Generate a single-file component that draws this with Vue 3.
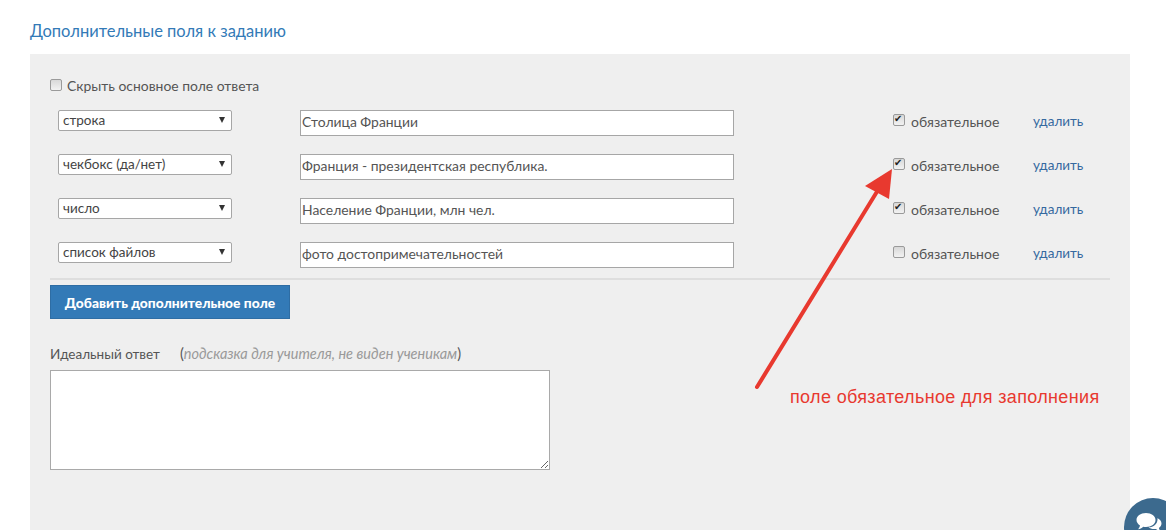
<script setup>
const rows = [
  { type: 'строка', label: 'Столица Франции', required: true },
  { type: 'чекбокс (да/нет)', label: 'Франция - президентская республика.', required: true },
  { type: 'число', label: 'Население Франции, млн чел.', required: true },
  { type: 'список файлов', label: 'фото достопримечательностей', required: false },
]
</script>

<template>
  <div class="page">
    <h2 class="title">Дополнительные поля к заданию</h2>
    <section class="panel">
      <label class="hide-main">
        <input type="checkbox" class="cb" />
        <span>Скрыть основное поле ответа</span>
      </label>
      <div class="rows">
        <div v-for="row in rows" :key="row.label" class="row">
          <div class="select">
            <span>{{ row.type }}</span>
            <i class="caret"></i>
          </div>
          <input class="text" type="text" :value="row.label" />
          <label class="req">
            <input type="checkbox" class="cb" :checked="row.required" />
            <span>обязательное</span>
          </label>
          <a class="del">удалить</a>
        </div>
      </div>
      <div class="divider"></div>
      <button class="add" type="button">Добавить дополнительное поле</button>
      <div class="ideal-label">
        <span class="ideal">Идеальный ответ</span>
        <span class="hint">(<em>подсказка для учителя, не виден ученикам</em>)</span>
      </div>
      <textarea class="area"></textarea>
    </section>

    <svg class="arrow" width="1166" height="530" viewBox="0 0 1166 530">
      <line x1="757" y1="387" x2="878" y2="190" stroke="#e8392f" stroke-width="4" stroke-linecap="round" />
      <polygon points="892,169 865,186 889,199" fill="#e8392f" />
    </svg>
    <div class="note">поле обязательное для заполнения</div>

    <div class="chat">
      <svg width="28" height="24" viewBox="0 0 28 24">
        <path d="M11 3c5.500 0 9.500 3 9.500 7s-4 7-9.500 7c-1 0-2-.1-2.800-.3C6.800 18 5 19 3 19.300c1-1 1.800-2.300 2-3.800C3 14.200 1.500 12.300 1.500 10c0-4 4-7 9.500-7z" fill="#fff"/>
        <path d="M22 8c2.800 1 4.500 3 4.500 5.500 0 1.800-1 3.400-2.600 4.500.2 1.200.8 2.300 1.600 3-1.800-.2-3.400-1-4.600-2.100-.6.100-1.300.2-1.900.2-2.200 0-4.200-.7-5.500-1.800 5.500-.2 9.500-3.800 9-9.300z" fill="#fff"/>
      </svg>
    </div>
  </div>
</template>

<style scoped>
.page {
  position: relative;
  height: 530px;
  overflow: hidden;
  padding: 0 36px 0 30px;
  box-sizing: border-box;
  font-family: "Lato", "Open Sans", sans-serif;
  font-size: 14px;
  color: #555;
  background: #fff;
}
.title {
  margin: 0;
  height: 54px;
  padding-top: 21px;
  box-sizing: border-box;
  font-size: 16.500px;
  line-height: 20px;
  font-weight: 400;
  color: #337ab7;
}
.panel {
  height: 476px;
  box-sizing: border-box;
  padding: 22px 20px 0;
  background: #efefef;
}
.hide-main {
  display: flex;
  align-items: center;
  gap: 5px;
  height: 18px;
  font-size: 13.900px;
}
.cb {
  appearance: none;
  position: relative;
  flex: none;
  width: 12px;
  height: 12px;
  margin: 0;
  border: 1px solid #9a9a9a;
  border-radius: 2px;
  box-sizing: border-box;
  background: linear-gradient(#d8d8d8, #f2f2f2);
}
.cb:checked::before {
  content: "✔";
  position: absolute;
  left: 0;
  top: -2px;
  font: 10px/12px "DejaVu Sans", sans-serif;
  color: #222;
}
.hide-main .cb {
  margin-top: -1px;
}
.rows {
  display: flex;
  flex-direction: column;
  gap: 18px;
  margin-top: 16px;
  padding-left: 8px;
}
.row {
  display: grid;
  grid-template-columns: 174px 502px 140px auto;
  height: 26px;
  align-items: start;
}
.select {
  display: flex;
  align-items: center;
  justify-content: space-between;
  height: 21px;
  box-sizing: border-box;
  padding: 0 6px 2px 4px;
  font-size: 13.500px;
  background: #fff;
  border: 1px solid #a6a6a6;
  border-radius: 2px;
  color: #444;
}
.caret {
  width: 0;
  height: 0;
  margin-top: 1px;
  border-left: 3.500px solid transparent;
  border-right: 3.500px solid transparent;
  border-top: 6px solid #333;
}
.text {
  margin-left: 68px;
  width: 434px;
  height: 26px;
  box-sizing: border-box;
  padding: 0 1px 3px;
  font: inherit;
  font-size: 13.900px;
  color: #555;
  background: #fff;
  border: 1px solid #a6a6a6;
  outline: none;
}
.req {
  display: flex;
  align-items: center;
  gap: 6px;
  height: 22px;
  margin-left: 159px;
}
.req .cb {
  margin-top: -3px;
}
.del {
  margin-left: 159px;
  line-height: 22px;
  font-size: 13.500px;
  color: #35699f;
  white-space: nowrap;
}
.divider {
  height: 2px;
  background: #dedede;
  margin-top: 10px;
}
.add {
  display: block;
  margin-top: 5px;
  width: 240px;
  height: 34px;
  padding: 0;
  font: 900 13.800px "Lato", "Open Sans", sans-serif;
  color: #fff;
  background: #337ab7;
  border: 1px solid #2e6da4;
}
.ideal-label {
  display: flex;
  gap: 20px;
  margin-top: 26px;
  line-height: 18px;
}
.ideal {
  font-size: 13.500px;
}
.hint {
  font-size: 14.500px;
}
.hint em {
  color: #999;
}
.area {
  display: block;
  margin-top: 7px;
  width: 500px;
  height: 100px;
  box-sizing: border-box;
  background: #fff;
  border: 1px solid #a9a9a9;
  outline: none;
}
.arrow {
  position: absolute;
  left: 0;
  top: 0;
  pointer-events: none;
}
.note {
  position: absolute;
  left: 790px;
  top: 386px;
  font: 18px/22px "Liberation Sans", sans-serif;
  letter-spacing: 0.35px;
  color: #e8392f;
}
.chat {
  position: absolute;
  left: 1124px;
  top: 498px;
  width: 58px;
  height: 58px;
  border-radius: 50%;
  background: #3c6a8e;
  padding: 12px 0 0 11px;
  box-sizing: border-box;
}
</style>
